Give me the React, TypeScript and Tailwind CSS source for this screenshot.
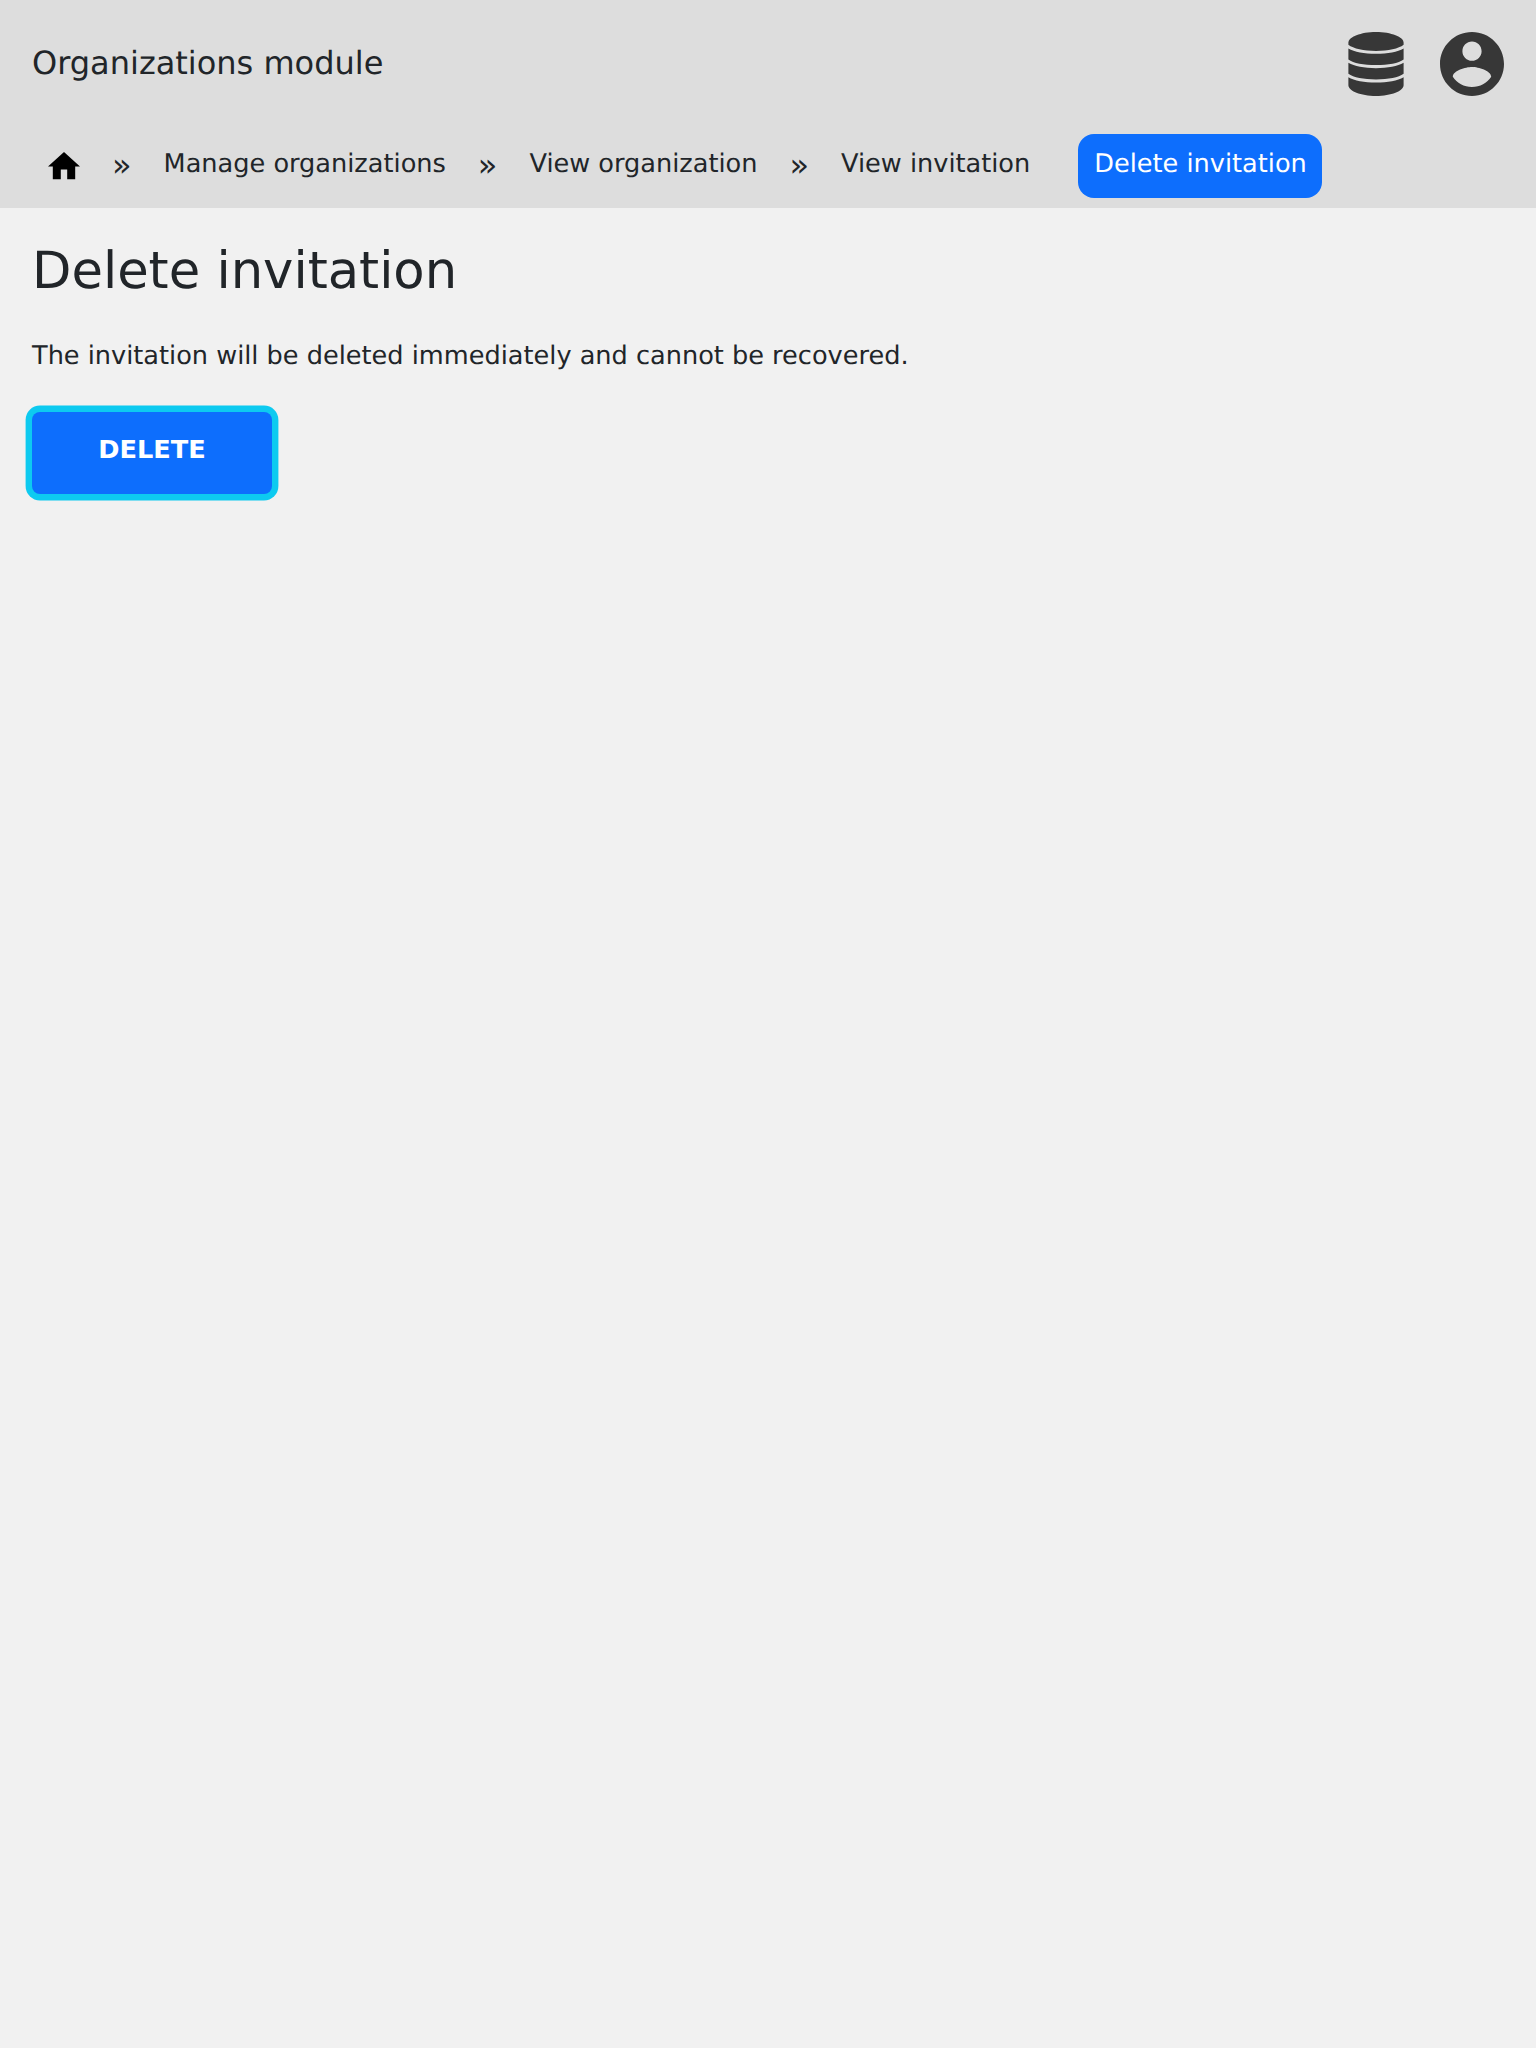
import React from "react";

function DatabaseIcon() {
  return (
    <svg className="h-16 w-14" viewBox="-0.4 0 56.8 64" preserveAspectRatio="none" fill="currentColor">
      <path d="M28 0C43.5 0 56 5 56 10.7V12.7C51 16.6 40.5 18.9 28 18.9S5 16.6 0 12.7V10.7C0 5 12.5 0 28 0Z" />
      <path d="M0 16.4C6 19.9 16 21.8 28 21.8S50 19.9 56 16.4V27.4C51 31 40.5 33.1 28 33.1S5 31 0 27.4Z" />
      <path d="M0 30.8C6 34.3 16 36.2 28 36.2S50 34.3 56 30.8V41.8C51 45.4 40.5 47.5 28 47.5S5 45.4 0 41.8Z" />
      <path d="M0 45.2C6 48.7 16 50.6 28 50.6S50 48.7 56 45.2V53.3C56 59 43.5 64 28 64S0 59 0 53.3Z" />
    </svg>
  );
}

function AccountIcon() {
  return (
    <svg className="size-16" viewBox="2 2 20 20" fill="currentColor">
      <path d="M12 2C6.48 2 2 6.48 2 12s4.48 10 10 10 10-4.48 10-10S17.52 2 12 2zm0 3c1.66 0 3 1.34 3 3s-1.34 3-3 3-3-1.34-3-3 1.34-3 3-3zm0 14.2c-2.5 0-4.71-1.28-6-3.22.03-1.99 4-3.08 6-3.08 1.99 0 5.97 1.09 6 3.08-1.29 1.94-3.5 3.22-6 3.22z" />
    </svg>
  );
}

function HomeIcon() {
  return (
    <svg className="mt-[6px] h-[27.2px] w-8 text-black" viewBox="2 3 20 17" fill="currentColor">
      <path d="M10 20v-6h4v6h5v-8h3L12 3 2 12h3v8z" />
    </svg>
  );
}

function Separator() {
  return <span className="mx-8 pt-[3px] text-[32px] leading-none">»</span>;
}

export default function App() {
  return (
    <div className="min-h-[2048px] bg-[#f1f1f1] font-['DejaVu_Sans',sans-serif] text-[#212529] [text-rendering:geometricPrecision]">
      <header className="h-[208px] bg-[#dddddd]">
        <div className="flex h-32 items-center justify-between px-8">
          <span className="pb-[2px] text-[32px] leading-[48px]">Organizations module</span>
          <div className="flex items-center gap-9 text-[#373737]">
            <DatabaseIcon />
            <AccountIcon />
          </div>
        </div>
        <nav className="flex h-[70px] items-center pl-12 text-[25.6px]">
          <HomeIcon />
          <Separator />
          <a className="pt-[2px]">Manage organizations</a>
          <Separator />
          <a className="pt-[2px]">View organization</a>
          <Separator />
          <a className="pt-[2px]">View invitation</a>
          <a className="mt-[6px] ml-12 flex h-16 items-center rounded-2xl bg-[#0d6efd] pr-[15.5px] pb-1 pl-4 text-white">Delete invitation</a>
        </nav>
      </header>
      <main className="px-8 pt-[33px]">
        <h1 className="text-[51.2px] leading-[61px]">Delete invitation</h1>
        <p className="mt-[35px] text-[25.6px] leading-[38px]">The invitation will be deleted immediately and cannot be recovered.</p>
        <button className="mt-[37px] h-[82px] w-[240px] rounded-lg bg-[#0d6efd] pb-2 text-[25.6px] font-bold text-white shadow-[0_0_0_6.4px_#0dcaf0]">DELETE</button>
      </main>
    </div>
  );
}
